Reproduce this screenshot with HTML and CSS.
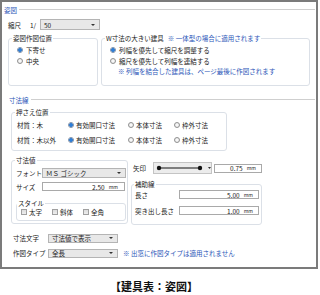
FILE: index.html
```html
<!DOCTYPE html>
<html lang="ja">
  <head>
    <meta charset="UTF-8" />
    <meta name="viewport" content="width=device-width, initial-scale=1.0" />
    <title>建具表：姿図</title>
    <link rel="stylesheet" href="styles.css">
  </head>
  <body>
    <main class="frame">
      <div class="secTitle">姿図</div>
      <div class="scaleRow">
        <span class="lblScale">縮尺</span><span class="lblRatio">1/</span>
        <div class="combo comboScale">50</div>
      </div>
      <div class="pair">
        <fieldset class="grp grpPos">
          <legend>姿図作図位置</legend>
          <div class="grpBody">
            <div class="opt"><span class="radio on"></span>下寄せ</div>
            <div class="opt"><span class="radio"></span>中央</div>
          </div>
        </fieldset>
        <fieldset class="grp grpWide">
          <legend>W寸法の大きい建具<span class="note legendNote">※ 一体型の場合に適用されます</span></legend>
          <div class="grpBody">
            <div class="opt"><span class="radio on"></span>列幅を優先して縮尺を調整する</div>
            <div class="opt"><span class="radio"></span>縮尺を優先して列幅を連結する</div>
            <div class="note wideNote">※ 列幅を結合した建具は、ページ最後に作図されます</div>
          </div>
        </fieldset>
      </div>

      <div class="secTitle secDim">寸法線</div>
      <fieldset class="grp grpOsae">
        <legend>押さえ位置</legend>
        <div class="osaeRow">
          <span class="matLbl">材質：木</span>
          <span class="choice c1"><span class="radio on"></span>有効開口寸法</span>
          <span class="choice c2"><span class="radio"></span>本体寸法</span>
          <span class="choice"><span class="radio"></span>枠外寸法</span>
        </div>
        <div class="osaeRow">
          <span class="matLbl">材質：木以外</span>
          <span class="choice c1"><span class="radio on"></span>有効開口寸法</span>
          <span class="choice c2"><span class="radio"></span>本体寸法</span>
          <span class="choice"><span class="radio"></span>枠外寸法</span>
        </div>
      </fieldset>

      <div class="lower">
        <fieldset class="grp grpValue">
          <legend>寸法値</legend>
          <div class="fieldRow first">
            <span class="fieldLbl">フォント</span>
            <div class="combo comboFont">ＭＳ ゴシック</div>
          </div>
          <div class="fieldRow">
            <span class="fieldLbl">サイズ</span>
            <div class="num numSize">2.50<span class="unit">mm</span></div>
          </div>
          <fieldset class="grp grpStyle">
            <legend>スタイル</legend>
            <div class="checks">
              <span class="check"><span class="box"></span>太字</span>
              <span class="check"><span class="box"></span>斜体</span>
              <span class="check"><span class="box"></span>全角</span>
            </div>
          </fieldset>
        </fieldset>

        <div class="rightCol">
          <div class="arrowRow">
            <span class="arrowLbl">矢印</span>
            <div class="arrowPick">
              <svg width="57" height="10" viewBox="0 0 57 10">
                <line x1="5" y1="5" x2="46" y2="5" stroke="#111" stroke-width="1" />
                <circle cx="5" cy="5" r="2.2" fill="#111" />
                <circle cx="46" cy="5" r="2.2" fill="#111" />
                <path d="M54 4 L57 4 L55.5 6 Z" fill="#333" />
              </svg>
            </div>
            <div class="num numArrow">0.75<span class="unit">mm</span></div>
          </div>
          <fieldset class="grp grpAux">
            <legend>補助線</legend>
            <div class="auxRow first">
              <span class="auxLbl">長さ</span>
              <div class="num numAux">5.00<span class="unit">mm</span></div>
            </div>
            <div class="auxRow">
              <span class="auxLbl">突き出し長さ</span>
              <div class="num numAux">1.00<span class="unit">mm</span></div>
            </div>
          </fieldset>
        </div>
      </div>

      <div class="optRow first">
        <span class="optLbl">寸法文字</span>
        <div class="combo comboOpt">寸法値で表示</div>
      </div>
      <div class="optRow">
        <span class="optLbl">作図タイプ</span>
        <div class="combo comboOpt">全長</div>
        <span class="note typeNote">※ 出窓に作図タイプは適用されません</span>
      </div>
    </main>
    <div class="caption">【建具表：姿図】</div>
  </body>
</html>
```

FILE: styles.css
```css
body {
  margin: 0;
  background: #fff;
  font-family: "Noto Sans CJK JP", "Noto Sans", sans-serif;
  font-size: 6.5px;
  line-height: 8px;
  color: #222;
}
.frame {
  box-sizing: border-box;
  width: 318px;
  height: 269px;
  border: 2px solid #7b7b7b;
  padding-top: 2px;
}
.secTitle {
  display: flex;
  align-items: center;
  height: 11px;
  padding-left: 2px;
  color: #2b56b8;
}
.secTitle::after {
  content: "";
  flex: 1;
  height: 1px;
  background: #cfcfcf;
  margin: 0 1px 0 2px;
}
.secDim {
  margin-top: 8px;
  padding-left: 7px;
}
.note {
  color: #2b56b8;
}

/* combo and number boxes */
.combo {
  box-sizing: border-box;
  display: flex;
  align-items: center;
  height: 10px;
  border: 1px solid #b4b4b4;
  background: #e8e8e8;
  padding-left: 3px;
  white-space: nowrap;
}
.combo::after {
  content: "";
  margin-left: auto;
  margin-right: 4px;
  border-left: 2px solid transparent;
  border-right: 2px solid transparent;
  border-top: 2px solid #333;
}
.num {
  box-sizing: border-box;
  display: flex;
  align-items: center;
  justify-content: flex-end;
  gap: 4px;
  height: 9px;
  border: 1px solid #a9a9a9;
  background: #fff;
  padding-right: 5px;
}
.unit {
  font-size: 5px;
}

/* group boxes */
.grp {
  box-sizing: border-box;
  margin: 0;
  min-width: 0;
  padding: 0 0 0 3px;
  border: 1px solid #dbe0e7;
  border-radius: 3px;
}
.grp legend {
  padding: 0 1px;
  line-height: 8px;
}
.radio {
  box-sizing: border-box;
  flex: none;
  width: 6px;
  height: 6px;
  border: 1px solid #909090;
  border-radius: 50%;
  background: radial-gradient(#fff, #e2e2e2);
  margin-right: 3px;
}
.radio.on {
  border-color: #7d8fa8;
  background: radial-gradient(#2e7fd9 0 1.7px, #e6ecf3 2.2px);
}
.opt {
  display: flex;
  align-items: center;
  height: 11px;
}

.scaleRow {
  display: flex;
  align-items: center;
  height: 11px;
  margin-top: 4px;
  padding-left: 6px;
}
.lblScale {
  width: 22px;
}
.lblRatio {
  width: 10px;
}
.comboScale {
  width: 60px;
  height: 11px;
}

.pair {
  display: flex;
  gap: 3px;
  margin-top: 4px;
  padding-left: 6px;
}
.grpPos {
  width: 90px;
  height: 52px;
}
.grpWide {
  width: 209px;
  height: 52px;
}
.grpBody {
  padding: 2px 0 0 5px;
}
.legendNote {
  margin-left: 4px;
}
.wideNote {
  height: 10px;
  line-height: 10px;
  margin-left: 8px;
}

.grpOsae {
  width: 216px;
  height: 43px;
  margin: 3px 0 0 9px;
  padding-top: 2px;
}
.osaeRow {
  display: flex;
  align-items: center;
  height: 14px;
  padding-left: 2px;
}
.osaeRow + .osaeRow {
  margin-top: 1px;
}
.matLbl {
  width: 51px;
}
.choice {
  display: flex;
  align-items: center;
}
.choice .radio {
  margin-right: 2px;
}
.c1 {
  width: 60px;
}
.c2 {
  width: 46px;
}

.lower {
  display: flex;
  gap: 3px;
  margin-top: 5px;
  padding-left: 9px;
}
.grpValue {
  width: 117px;
  height: 68px;
  padding-top: 3px;
}
.fieldRow {
  display: flex;
  align-items: center;
  height: 11px;
  padding-left: 1px;
}
.fieldRow + .fieldRow {
  margin-top: 3px;
}
.fieldLbl {
  width: 26px;
}
.comboFont {
  width: 84px;
}
.numSize {
  width: 83px;
  padding-right: 6px;
}
.grpStyle {
  width: 110px;
  height: 22px;
  margin: 7px 0 0 1px;
  padding-left: 0;
}
.checks {
  display: flex;
  align-items: center;
  height: 10px;
  padding-left: 4px;
}
.check {
  display: flex;
  align-items: center;
  width: 31px;
}
.box {
  box-sizing: border-box;
  width: 6px;
  height: 6px;
  border: 1px solid #a0a0a0;
  background: linear-gradient(#dcdcdc, #eeeeee);
  margin-right: 2px;
}

.rightCol {
  width: 131px;
}
.arrowRow {
  display: flex;
  align-items: center;
  height: 12px;
  margin-top: 6px;
  padding-left: 2px;
}
.arrowLbl {
  width: 20px;
}
.arrowPick {
  box-sizing: border-box;
  display: flex;
  align-items: center;
  width: 59px;
  height: 12px;
  border: 1px solid #c4c4c4;
  background: #ececec;
}
.numArrow {
  width: 48px;
  margin-left: 2px;
}
.grpAux {
  width: 131px;
  height: 45px;
  margin-top: 6px;
  padding: 1px 0 0 2px;
}
.auxRow {
  display: flex;
  align-items: center;
  height: 11px;
  padding-left: 1px;
}
.auxRow + .auxRow {
  margin-top: 5px;
}
.auxLbl {
  width: 44px;
}
.numAux {
  width: 80px;
}

.optRow {
  display: flex;
  align-items: center;
  height: 10px;
  margin-top: 5px;
  padding-left: 11px;
}
.optRow.first {
  margin-top: 8px;
}
.optLbl {
  width: 35px;
}
.comboOpt {
  width: 70px;
  height: 9px;
}
.typeNote {
  margin-left: 5px;
}

.caption {
  margin-top: 11px;
  padding-left: 110px;
  font-size: 11px;
  line-height: 13px;
  font-weight: bold;
  color: #111;
}
```
